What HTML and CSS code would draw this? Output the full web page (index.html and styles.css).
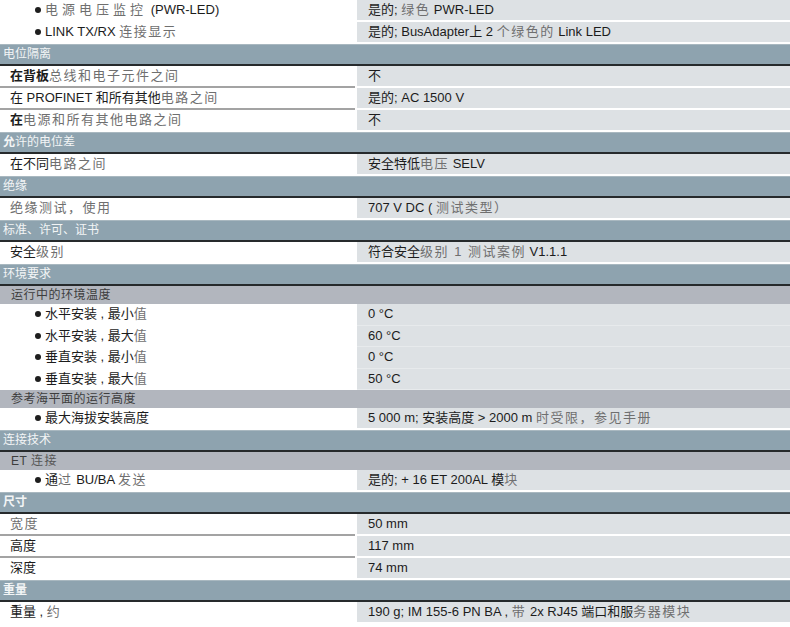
FILE: index.html
```html
<!DOCTYPE html>
<html lang="zh">
<head>
<meta charset="utf-8">
<link rel="stylesheet" href="styles.css">
</head>
<body>
<div class="spec">
  <div class="row"><div class="k b"><span class="dot"></span><span class="g w">电源电压监控</span> (PWR-LED)</div><div class="v">是的; <span class="g">绿色</span> PWR-LED</div></div>
  <div class="row"><div class="k b"><span class="dot"></span>LINK TX/RX <span class="g">连接显示</span></div><div class="v">是的; BusAdapter上 2 <span class="g">个绿色的</span> Link LED</div></div>

  <div class="hdr">电位隔离</div>
  <div class="row ln"><div class="k"><strong>在背板</strong><span class="g">总线和电子元件之间</span></div><div class="v">不</div></div>
  <div class="row ln"><div class="k">在 PROFINET 和所有其他<span class="g">电路之间</span></div><div class="v">是的; AC 1500 V</div></div>
  <div class="row"><div class="k"><strong>在</strong><span class="g">电源和所有其他电路之间</span></div><div class="v">不</div></div>

  <div class="hdr"><strong>允</strong>许的电位差</div>
  <div class="row"><div class="k">在不同<span class="g">电路之间</span></div><div class="v">安全特低<span class="g">电压</span> SELV</div></div>

  <div class="hdr">绝缘</div>
  <div class="row"><div class="k"><span class="g">绝缘测试，使用</span></div><div class="v">707 V DC ( <span class="g">测试类型）</span></div></div>

  <div class="hdr">标准、许可、证书</div>
  <div class="row"><div class="k">安全<span class="g">级别</span></div><div class="v">符合安全<span class="g">级别 1 测试案例</span> V1.1.1</div></div>

  <div class="hdr">环境要求</div>
  <div class="sub">运行中的环境温度</div>
  <div class="row t"><div class="k b"><span class="dot"></span>水平安装 , 最小<span class="g">值</span></div><div class="v">0 °C</div></div>
  <div class="row t"><div class="k b"><span class="dot"></span>水平安装 , 最大<span class="g">值</span></div><div class="v">60 °C</div></div>
  <div class="row t"><div class="k b"><span class="dot"></span>垂直安装 , 最小<span class="g">值</span></div><div class="v">0 °C</div></div>
  <div class="row t"><div class="k b"><span class="dot"></span>垂直安装 , 最大<span class="g">值</span></div><div class="v">50 °C</div></div>
  <div class="sub">参考海平面的运行高度</div>
  <div class="row"><div class="k b"><span class="dot"></span>最大海拔安装高度</div><div class="v">5 000 m; 安装高度 &gt; 2000 m <span class="g">时受限，参见手册</span></div></div>

  <div class="hdr">连接技术</div>
  <div class="sub">ET <span class="g">连接</span></div>
  <div class="row"><div class="k b"><span class="dot"></span>通<span class="g">过</span> BU/BA <span class="g">发送</span></div><div class="v">是的; + 16 ET 200AL 模<span class="g">块</span></div></div>

  <div class="hdr"><strong>尺寸</strong></div>
  <div class="row ln"><div class="k"><span class="g">宽度</span></div><div class="v">50 mm</div></div>
  <div class="row ln"><div class="k">高度</div><div class="v">117 mm</div></div>
  <div class="row"><div class="k">深度</div><div class="v">74 mm</div></div>

  <div class="hdr"><strong>重量</strong></div>
  <div class="row"><div class="k">重量 , <span class="g">约</span></div><div class="v">190 g; IM 155-6 PN BA , <span class="g">带</span> 2x RJ45 端口和服<span class="g">务器模块</span></div></div>
</div>
</body>
</html>
```

FILE: styles.css
```css
html, body {
  margin: 0;
  padding: 0;
  background: #ffffff;
}

body {
  width: 790px;
  font-family: "Liberation Sans", "Noto Sans CJK SC", sans-serif;
  font-size: 13px;
  color: #1c1c1c;
}

.spec {
  display: flex;
  flex-direction: column;
}

.row {
  display: grid;
  grid-template-columns: 357px 1fr;
  height: 22px;
}

.row .k {
  box-sizing: border-box;
  height: 22px;
  padding-left: 10px;
  line-height: 20px;
  white-space: nowrap;
}

.row .k.b {
  padding-left: 35px;
}

.row.ln .k {
  border-bottom: 2px solid #a3a3a3;
  margin-right: 2px;
}

.row .v {
  background: #dde1e4;
  height: 20px;
  line-height: 20px;
  padding-left: 11px;
  white-space: nowrap;
}

.row.t {
  height: 21.5px;
}

.row.t .v {
  height: 20.5px;
  border-bottom: 1px solid #e7eaec;
}

.dot {
  display: inline-block;
  width: 6px;
  height: 6px;
  border-radius: 50%;
  background: #1e1e1e;
  margin-right: 4px;
  vertical-align: 1px;
}

.g {
  color: #6f6f6f;
  letter-spacing: 1.5px;
}

.g.w {
  letter-spacing: 4px;
}

strong {
  font-weight: bold;
}

.hdr {
  box-sizing: border-box;
  height: 22px;
  background: #8ea3af;
  border-top: 1px solid #a9b8c0;
  border-bottom: 2px solid #262a2c;
  color: #f3f5f6;
  padding-left: 3px;
  font-size: 12px;
  line-height: 19px;
}

.sub {
  height: 18px;
  background: #b2b6be;
  color: #3d3d3d;
  padding-left: 11px;
  font-size: 12px;
  line-height: 18px;
  letter-spacing: 0.5px;
}

.sub .g {
  color: #555;
}
```
